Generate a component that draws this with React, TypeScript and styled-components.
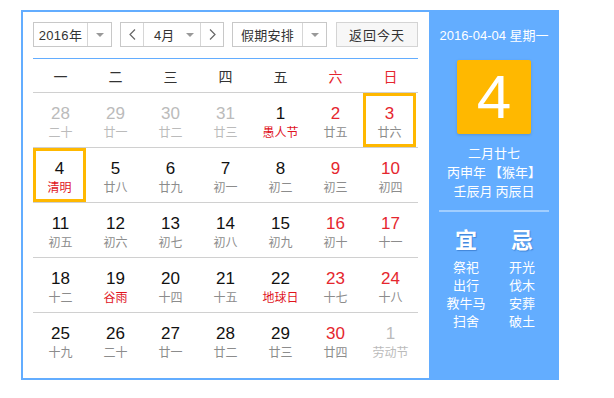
import React from "react";
import styled, { createGlobalStyle } from "styled-components";

const Global = createGlobalStyle`
  html, body { margin: 0; padding: 0; background: #fff; }
  body { font-family: "Liberation Sans", "Noto Sans CJK SC", sans-serif; }
`;

const BLUE = "#63adff";
const ORANGE = "#ffb800";
const RED = "#e5262e";

const Page = styled.div`
  padding: 10px 0 0 21px;
`;

const Calendar = styled.div`
  display: flex;
  width: 538px;
  height: 370px;
`;

const Main = styled.div`
  box-sizing: border-box;
  width: 408px;
  height: 370px;
  border: 2px solid ${BLUE};
  border-right: none;
  padding: 10px 11px 0 10px;
`;

const Toolbar = styled.div`
  display: flex;
  align-items: center;
  height: 25px;
  gap: 8px;
  font-family: "Noto Sans CJK SC", sans-serif;
  font-size: 13px;
  color: #333;
`;

const SelectBox = styled.div<{ $w: number }>`
  box-sizing: border-box;
  display: flex;
  width: ${(p) => p.$w}px;
  height: 25px;
  border: 1px solid #c8c8c8;
  background: #fff;
`;

const SelectLabel = styled.div`
  flex: 1;
  display: flex;
  align-items: center;
  justify-content: center;
  font-family: "Liberation Sans", "Noto Sans CJK SC", sans-serif;
  letter-spacing: 0.3px;
`;

const Caret = styled.div`
  width: 23px;
  border-left: 1px solid #d6d6d6;
  display: flex;
  align-items: center;
  justify-content: center;
  &::after {
    content: "";
    border-left: 4px solid transparent;
    border-right: 4px solid transparent;
    border-top: 4px solid #999;
  }
`;

const ArrowBtn = styled.div<{ $side: "l" | "r" }>`
  width: 22px;
  display: flex;
  align-items: center;
  justify-content: center;
  ${(p) => (p.$side === "l" ? "border-right" : "border-left")}: 1px solid #d6d6d6;
`;

const MonthLabel = styled.div`
  flex: 1;
  display: flex;
  align-items: center;
  padding-left: 10px;
  font-family: "Liberation Sans", "Noto Sans CJK SC", sans-serif;
`;

const MonthCaret = styled.div`
  width: 20px;
  display: flex;
  align-items: center;
  justify-content: center;
  &::after {
    content: "";
    border-left: 4px solid transparent;
    border-right: 4px solid transparent;
    border-top: 4px solid #999;
  }
`;

const TodayBtn = styled.div`
  box-sizing: border-box;
  margin-left: 1px;
  width: 82px;
  height: 25px;
  border: 1px solid #d4d4d4;
  background: #f7f7f7;
  display: flex;
  align-items: center;
  justify-content: center;
  letter-spacing: 1px;
`;

const BlueRule = styled.div`
  height: 1px;
  background: ${BLUE};
  margin-top: 11px;
`;

const WeekHead = styled.div`
  display: grid;
  grid-template-columns: repeat(7, 55px);
  height: 34px;
  border-bottom: 1px solid #d0d0d0;
  box-sizing: border-box;
`;

const WeekName = styled.div<{ $red?: boolean }>`
  display: flex;
  align-items: center;
  justify-content: center;
  font-family: "Noto Sans CJK SC", sans-serif;
  font-size: 14px;
  color: ${(p) => (p.$red ? RED : "#333")};
`;

const Row = styled.div<{ $last?: boolean }>`
  display: grid;
  grid-template-columns: repeat(7, 55px);
  height: 55px;
  box-sizing: border-box;
  border-bottom: ${(p) => (p.$last ? "none" : "1px solid #d0d0d0")};
`;

const Cell = styled.div<{ $sel?: boolean }>`
  box-sizing: border-box;
  display: flex;
  flex-direction: column;
  align-items: center;
  padding-top: ${(p) => (p.$sel ? 8 : 11)}px;
  margin: ${(p) => (p.$sel ? "0 2px 0 0" : "0")};
  border: ${(p) => (p.$sel ? `3px solid ${ORANGE}` : "none")};
`;

const DayNum = styled.div<{ $tone: "n" | "r" | "g" }>`
  font-family: "Liberation Sans", sans-serif;
  font-size: 17px;
  line-height: 19px;
  color: ${(p) => (p.$tone === "r" ? RED : p.$tone === "g" ? "#bbb" : "#111")};
`;

const Lunar = styled.div<{ $tone: "n" | "r" | "g" }>`
  font-family: "Noto Sans CJK SC", sans-serif;
  font-size: 12px;
  line-height: 17px;
  color: ${(p) => (p.$tone === "r" ? "#e0141e" : p.$tone === "g" ? "#bbb" : "#8c8c8c")};
`;

const Side = styled.div`
  width: 130px;
  height: 370px;
  background: ${BLUE};
  color: #fff;
  display: flex;
  flex-direction: column;
  align-items: center;
  font-family: "Noto Sans CJK SC", sans-serif;
`;

const DateLine = styled.div`
  margin-top: 17px;
  font-size: 13px;
  line-height: 18px;
  font-family: "Liberation Sans", "Noto Sans CJK SC", sans-serif;
`;

const BigDay = styled.div`
  margin-top: 15px;
  width: 74px;
  height: 74px;
  background: ${ORANGE};
  border-radius: 2px;
  box-shadow: 0 1px 3px rgba(0, 0, 0, 0.15);
  display: flex;
  align-items: center;
  justify-content: center;
  font-family: "Liberation Sans", sans-serif;
  font-size: 62px;
  line-height: 1;
`;

const InfoLines = styled.div`
  margin-top: 9px;
  display: flex;
  flex-direction: column;
  align-items: center;
  font-size: 13px;
  line-height: 19px;
`;

const Divider = styled.div`
  margin-top: 10px;
  width: 110px;
  height: 2px;
  background: rgba(255, 255, 255, 0.4);
`;

const YiJi = styled.div`
  margin-top: 12px;
  display: grid;
  grid-template-columns: 56px 56px;
`;

const YiJiCol = styled.div`
  display: flex;
  flex-direction: column;
  align-items: center;
`;

const YiJiTitle = styled.div`
  font-size: 22px;
  font-weight: bold;
  line-height: 28px;
  text-shadow: 1px 1px 1px rgba(0, 60, 140, 0.35);
  margin-bottom: 6px;
`;

const YiJiItem = styled.div`
  font-size: 13px;
  line-height: 18px;
`;

type Day = { d: number; l: string; other?: boolean; fest?: boolean; sel?: boolean };

const rows: Day[][] = [
  [
    { d: 28, l: "二十", other: true },
    { d: 29, l: "廿一", other: true },
    { d: 30, l: "廿二", other: true },
    { d: 31, l: "廿三", other: true },
    { d: 1, l: "愚人节", fest: true },
    { d: 2, l: "廿五" },
    { d: 3, l: "廿六", sel: true },
  ],
  [
    { d: 4, l: "清明", fest: true, sel: true },
    { d: 5, l: "廿八" },
    { d: 6, l: "廿九" },
    { d: 7, l: "初一" },
    { d: 8, l: "初二" },
    { d: 9, l: "初三" },
    { d: 10, l: "初四" },
  ],
  [
    { d: 11, l: "初五" },
    { d: 12, l: "初六" },
    { d: 13, l: "初七" },
    { d: 14, l: "初八" },
    { d: 15, l: "初九" },
    { d: 16, l: "初十" },
    { d: 17, l: "十一" },
  ],
  [
    { d: 18, l: "十二" },
    { d: 19, l: "谷雨", fest: true },
    { d: 20, l: "十四" },
    { d: 21, l: "十五" },
    { d: 22, l: "地球日", fest: true },
    { d: 23, l: "十七" },
    { d: 24, l: "十八" },
  ],
  [
    { d: 25, l: "十九" },
    { d: 26, l: "二十" },
    { d: 27, l: "廿一" },
    { d: 28, l: "廿二" },
    { d: 29, l: "廿三" },
    { d: 30, l: "廿四" },
    { d: 1, l: "劳动节", other: true },
  ],
];

const weekNames = ["一", "二", "三", "四", "五", "六", "日"];

const Chevron = ({ dir }: { dir: "l" | "r" }) => (
  <svg width="7" height="11" viewBox="0 0 7 11">
    <path
      d={dir === "l" ? "M6 0.5 L1 5.5 L6 10.5" : "M1 0.5 L6 5.5 L1 10.5"}
      fill="none"
      stroke="#666"
      strokeWidth="1.2"
    />
  </svg>
);

export default function App() {
  return (
    <Page>
      <Global />
      <Calendar>
        <Main>
          <Toolbar>
            <SelectBox $w={79}>
              <SelectLabel>2016年</SelectLabel>
              <Caret />
            </SelectBox>
            <SelectBox $w={104}>
              <ArrowBtn $side="l">
                <Chevron dir="l" />
              </ArrowBtn>
              <MonthLabel>4月</MonthLabel>
              <MonthCaret />
              <ArrowBtn $side="r">
                <Chevron dir="r" />
              </ArrowBtn>
            </SelectBox>
            <SelectBox $w={95}>
              <SelectLabel>假期安排</SelectLabel>
              <Caret />
            </SelectBox>
            <TodayBtn>返回今天</TodayBtn>
          </Toolbar>
          <BlueRule />
          <WeekHead>
            {weekNames.map((w, i) => (
              <WeekName key={w} $red={i >= 5}>
                {w}
              </WeekName>
            ))}
          </WeekHead>
          {rows.map((r, ri) => (
            <Row key={ri} $last={ri === rows.length - 1}>
              {r.map((c, ci) => {
                const numTone = c.other ? "g" : ci >= 5 ? "r" : "n";
                const lunTone = c.other ? "g" : c.fest ? "r" : "n";
                return (
                  <Cell key={ci} $sel={c.sel}>
                    <DayNum $tone={numTone}>{c.d}</DayNum>
                    <Lunar $tone={lunTone}>{c.l}</Lunar>
                  </Cell>
                );
              })}
            </Row>
          ))}
        </Main>
        <Side>
          <DateLine>2016-04-04 星期一</DateLine>
          <BigDay>4</BigDay>
          <InfoLines>
            <div>二月廿七</div>
            <div>丙申年 【猴年】</div>
            <div>壬辰月 丙辰日</div>
          </InfoLines>
          <Divider />
          <YiJi>
            <YiJiCol>
              <YiJiTitle>宜</YiJiTitle>
              <YiJiItem>祭祀</YiJiItem>
              <YiJiItem>出行</YiJiItem>
              <YiJiItem>教牛马</YiJiItem>
              <YiJiItem>扫舍</YiJiItem>
            </YiJiCol>
            <YiJiCol>
              <YiJiTitle>忌</YiJiTitle>
              <YiJiItem>开光</YiJiItem>
              <YiJiItem>伐木</YiJiItem>
              <YiJiItem>安葬</YiJiItem>
              <YiJiItem>破土</YiJiItem>
            </YiJiCol>
          </YiJi>
        </Side>
      </Calendar>
    </Page>
  );
}
